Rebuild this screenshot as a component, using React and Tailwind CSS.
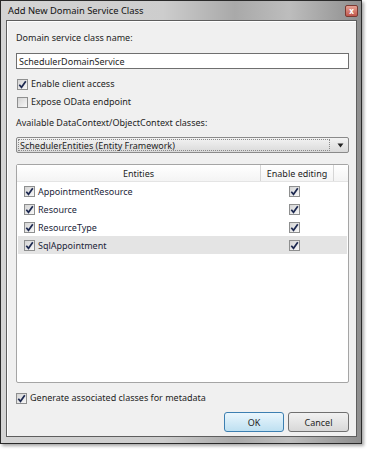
import React from "react";

const font = { fontFamily: '"Noto Sans", "Open Sans", sans-serif' };

function Check({ checked }) {
  return (
    <span className="flex h-[11px] w-[11px] shrink-0 items-center justify-center border border-[#8e8f8f] bg-gradient-to-br from-[#d4d4d4] to-[#f8f8f8]">
      {checked && (
        <svg width="9" height="9" viewBox="0 0 9 9">
          <path d="M1.3 4.7 L3.5 7.3 L7.8 1.2" fill="none" stroke="#1c2850" strokeWidth="1.7" />
        </svg>
      )}
    </span>
  );
}

function CheckRow({ checked, label, className = "" }) {
  return (
    <div className={"flex h-[12px] items-center gap-[3px] " + className}>
      <Check checked={checked} />
      <span className="leading-[12px]">{label}</span>
    </div>
  );
}

const rows = ["AppointmentResource", "Resource", "ResourceType", "SqlAppointment"];

export default function App() {
  return (
    <div className="h-[449px] w-[367px] bg-white" style={font}>
      <div className="flex h-[444px] w-[362px] flex-col border border-[#2a2a2a] bg-[linear-gradient(90deg,#d4d4d4_0%,#cdcdcd_45%,#a9a9a9_65%,#bdbdbd_80%,#8e8e8e_100%)] shadow-[2px_2px_3px_rgba(0,0,0,0.35)]">
        <div className="flex h-[19px] shrink-0 items-center justify-between pl-[7px] pr-[3px]">
          <span className="text-[9.4px] leading-none text-[#111]">Add New Domain Service Class</span>
          <span className="flex h-[12px] w-[13px] items-center justify-center rounded-[2px] border border-[#7a3a32] bg-gradient-to-b from-[#e6a396] to-[#c0574d] text-[8px] font-bold leading-none text-white">
            x
          </span>
        </div>
        <div className="mb-[6px] ml-[5px] mr-[4px] flex flex-1 flex-col border border-[#5e5e5e] bg-[#f0f0f0] text-[9px] text-[#1e1e1e]">
          <div className="flex flex-1 flex-col border-l border-t border-white pl-[8px] pr-[7px] pt-[10px]">
            <div className="h-[12px] leading-[12px]">Domain service class name:</div>
            <div className="mt-[9px] flex h-[16px] items-center border border-[#6f6f6f] bg-white px-[2px] leading-none">
              SchedulerDomainService
            </div>
            <CheckRow checked label="Enable client access" className="mt-[9px] pl-[1px]" />
            <CheckRow label="Expose OData endpoint" className="mt-[6px] pl-[1px]" />
            <div className="mt-[9px] h-[12px] leading-[12px]">Available DataContext/ObjectContext classes:</div>
            <div className="mt-[8px] flex h-[16px] items-center rounded-[2px] border border-[#8a8a8a] bg-gradient-to-b from-[#f3f3f3] to-[#dadada] pl-[1px] pr-[4px]">
              <div className="flex h-[12px] w-[315px] items-center border border-dotted border-[#8a8a8a] pl-[1px] leading-none">
                SchedulerEntities (Entity Framework)
              </div>
              <svg width="7" height="5" viewBox="0 0 7 5" className="ml-[7px]">
                <path d="M0.5 0.5 L6.5 0.5 L3.5 4.5 Z" fill="#222" />
              </svg>
            </div>
            <div className="mt-[11px] flex h-[219px] flex-col rounded-[2px] border border-[#a5a5a5] bg-white">
              <div className="flex h-[17px] shrink-0 border-b border-[#e4e4e4] bg-gradient-to-b from-white to-[#f4f4f4] leading-none">
                <div className="flex w-[244px] items-center justify-center border-r border-[#d6d6d6]">Entities</div>
                <div className="flex w-[73px] items-center justify-center border-r border-[#d6d6d6]">Enable editing</div>
              </div>
              <div className="flex flex-col px-[1px]">
                {rows.map((r, i) => (
                  <div key={r} className={"flex h-[18px] items-center " + (i === 3 ? "bg-[#e4e4e4]" : "")}>
                    <div className="flex w-[243px] items-center gap-[3px] pl-[6px] text-[#1c1f3a]">
                      <Check checked />
                      <span className="leading-none">{r}</span>
                    </div>
                    <div className="flex w-[72px] justify-center pr-[6px]">
                      <Check checked />
                    </div>
                  </div>
                ))}
              </div>
            </div>
            <CheckRow checked label="Generate associated classes for metadata" className="mt-[9px]" />
            <div className="mt-[8px] flex justify-end gap-[4px]">
              <div className="flex h-[20px] w-[60px] items-center justify-center rounded-[3px] border border-[#3c7fb1] bg-gradient-to-b from-[#eaf6fd] to-[#bee0f1] leading-none">
                OK
              </div>
              <div className="flex h-[20px] w-[61px] items-center justify-center rounded-[3px] border border-[#707070] bg-gradient-to-b from-[#f2f2f2] to-[#d8d8d8] leading-none">
                Cancel
              </div>
            </div>
          </div>
        </div>
      </div>
    </div>
  );
}
